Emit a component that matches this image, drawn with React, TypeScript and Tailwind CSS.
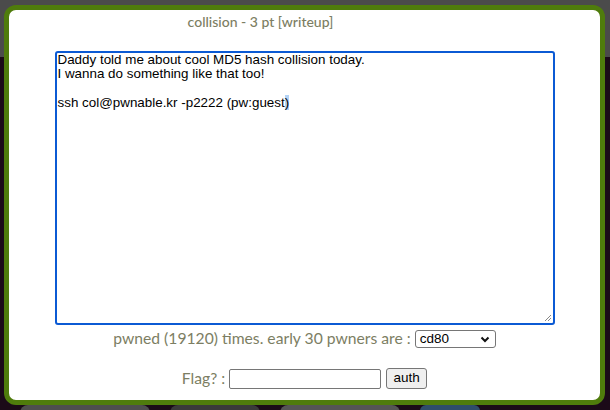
export default function App() {
  const label = "text-[#7c7e63] font-['Lato',sans-serif]";

  return (
    <div className="w-[610px] h-[410px] overflow-hidden bg-[linear-gradient(#4b4b4b_0_57px,#1b0a18_57px)] pt-[5px] pl-[4px]">
      <div className="w-[601px] h-[400px] rounded-[12px] border-[5px] border-[#4f7c0c] bg-white flex flex-col items-center">
        <h2 className={`${label} text-[14px] font-medium leading-[20px] mt-[2px] pr-[88px]`}>
          collision - 3 pt [writeup]
        </h2>

        <div className="relative mt-[19px] w-[500px] h-[274px] border-2 border-[#0b5ad4] rounded-[3px] px-[1px] py-0 font-['Liberation_Sans',Arial,sans-serif] text-[13.4px] leading-[14.4px] text-black whitespace-pre">
          {"Daddy told me about cool MD5 hash collision today.\nI wanna do something like that too!\n\nssh col@pwnable.kr -p2222 (pw:guest"}
          <span className="bg-[#b4d3f5]">)</span>
          <svg className="absolute right-[1px] bottom-[1px]" width="9" height="9" viewBox="0 0 9 9">
            <path d="M8 2 L2 8 M8 5 L5 8" stroke="#888" strokeWidth="1" />
          </svg>
        </div>

        <div className="flex items-center mt-[5px] h-[18px]">
          <span className={`${label} text-[15.7px]`}>pwned (19120) times. early 30 pwners are :</span>
          <div className="ml-[4px] w-[81px] h-[18px] border border-[#767676] rounded-[3px] flex items-center justify-between pl-[4px] pr-[5px] font-['Liberation_Sans',Arial,sans-serif] text-[13.5px] text-black">
            <span>cd80</span>
            <svg width="10" height="7" viewBox="0 0 10 7">
              <path d="M1.5 1.5 L5 5 L8.5 1.5" fill="none" stroke="#111" strokeWidth="2" />
            </svg>
          </div>
        </div>

        <div className="flex items-center mt-[20px] h-[21px]">
          <span className={`${label} text-[15.7px]`}>Flag? :</span>
          <div className="ml-[4px] w-[152px] h-[20px] border border-[#767676] rounded-[2px]" />
          <div className="ml-[5px] h-[21px] w-[41px] justify-center border border-[#767676] rounded-[3px] bg-[#efefef] flex items-center font-['Liberation_Sans',Arial,sans-serif] text-[13.5px] text-black">
            auth
          </div>
        </div>
      </div>

      <div className="flex gap-[20px] ml-[16px]">
        <div className="w-[130px] h-[10px] rounded-t-[8px] bg-[#4e4e4e]" />
        <div className="w-[90px] h-[10px] rounded-t-[8px] bg-[#3a3a3a]" />
        <div className="w-[120px] h-[10px] rounded-t-[8px] bg-[#555]" />
        <div className="w-[60px] h-[10px] rounded-t-[6px] bg-[#2f4d6a]" />
      </div>
    </div>
  );
}
